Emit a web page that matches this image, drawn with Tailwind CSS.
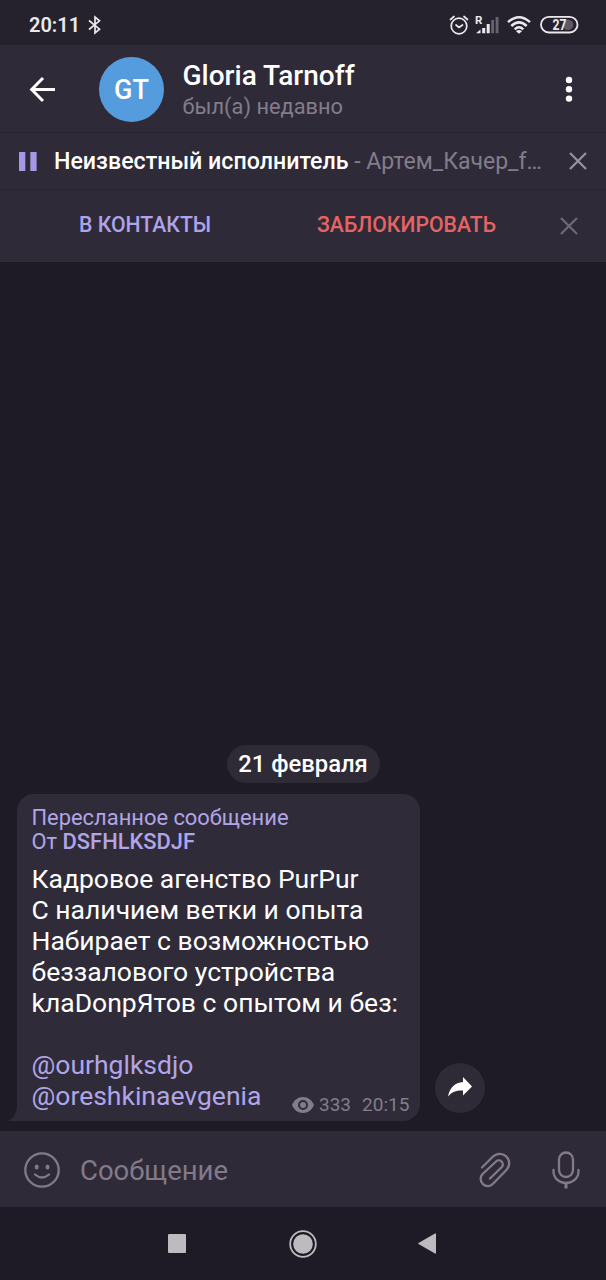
<!DOCTYPE html>
<html lang="ru">
<head>
<meta charset="utf-8">
<title>Gloria Tarnoff</title>
<script src="https://cdn.jsdelivr.net/npm/@tailwindcss/browser@4"></script>
</head>
<body class="bg-[#1e1b26]">
<div class="flex h-[1280px] w-[606px] flex-col overflow-hidden bg-[#1e1b26] font-['Roboto',sans-serif] text-white">

  <!-- Status bar -->
  <div class="flex h-[45px] shrink-0 items-center bg-[#25222d] pt-[5px] pl-[29px] text-[#ebe9ee]">
    <span class="w-[58px] text-[20px] leading-6 font-semibold whitespace-nowrap">20:11</span>
    <svg class="h-5 w-4" viewBox="0 0 16 20" fill="none" stroke="currentColor" stroke-width="1.7"><path d="M2 5.500 12.500 14.200 8 18V2L12.500 5.800 2 14.500"/></svg>
    <svg class="ml-[346px] h-5 w-5" viewBox="0 0 20 20" fill="none" stroke="currentColor" stroke-width="1.7" stroke-linecap="round"><circle cx="10" cy="11" r="7.8"/><path d="M1.500 4.500 5 1.500M18.500 4.500 15 1.500M7 10l3 2.500 3.500-2.500"/></svg>
    <svg class="ml-[6px] h-5 w-6 overflow-visible" viewBox="0 0 24 20" fill="currentColor"><text x="0" y="9" class="text-[11.5px] font-bold">R</text><path d="M1 18.200 5.500 14.500v3.700zM7.200 13h3v5.200h-3zM11.700 9h3v9.200h-3z"/><path d="M16.200 5h2.800v13.200h-2.800zM20.600 2h2.900v16.200h-2.900z" fill="#66636c"/></svg>
    <svg class="ml-[8px] h-5 w-6" viewBox="0 0 24 20" fill="none" stroke="currentColor" stroke-width="2.5"><path d="M1 7.200Q12-2.800 23 7.200M4.300 11Q12 3.800 19.700 11M7.700 14.300Q12 10.200 16.300 14.300"/><path d="M9 16.300q3-2.600 6 0l-3 2.500z" fill="currentColor" stroke="none"/></svg>
    <svg class="ml-[8px] h-5 w-10" viewBox="0 0 40 20"><circle cx="29" cy="9.700" r="5.300" fill="#5d5a64"/><rect x="2" y="1.900" width="36.500" height="15.600" rx="7.800" fill="none" stroke="currentColor" stroke-width="1.8"/><text x="13.500" y="14.700" textLength="14" lengthAdjust="spacingAndGlyphs" fill="currentColor" class="text-[14px] font-bold">27</text></svg>
  </div>

  <!-- Chat header -->
  <header class="flex h-[87px] shrink-0 items-center bg-[#2f2a38] pt-px pl-[29px]">
    <svg class="h-7 w-7" viewBox="0 0 28 28" fill="none" stroke="white" stroke-width="3"><path d="M26 14.500H3M14 3 2.700 14.500 14 26"/></svg>
    <div class="ml-[42px] flex size-[65px] items-center justify-center rounded-full bg-[#549cdd] pt-[3px] text-[27px] font-medium">GT</div>
    <div class="ml-[18.5px] w-[369.5px] pt-[4px] whitespace-nowrap">
      <div class="text-[28px] leading-8 font-medium">Gloria Tarnoff</div>
      <div class="text-[21.8px] leading-[30px] text-[#827d8b]">был(а) недавно</div>
    </div>
    <svg class="ml-[8px] h-7 w-[18px]" viewBox="0 0 18 28" fill="white"><circle cx="9" cy="5" r="3.2"/><circle cx="9" cy="14.300" r="3.2"/><circle cx="9" cy="23.600" r="3.2"/></svg>
  </header>

  <!-- Audio player -->
  <div class="flex h-[57px] shrink-0 items-center border-t border-[#29252f] bg-[#2f2a38] pl-[19px]">
    <svg class="h-[19px] w-[18px]" viewBox="0 0 18 19" fill="#a598e5"><rect width="6.3" height="19" rx=".5"/><rect x="11.300" width="6.3" height="19" rx=".5"/></svg>
    <p class="ml-[17px] w-[506px] pt-px text-[23.2px] leading-7 whitespace-nowrap text-[#827d8b]"><span class="font-medium text-white">Неизвестный исполнитель</span><span class="text-[23px]"> - Артем_Качер_f…</span></p>
    <svg class="ml-[9px] h-[18px] w-[18px]" viewBox="0 0 18 18" fill="none" stroke="#96929f" stroke-width="2.2"><path d="m1 1 16 16M17 1 1 17"/></svg>
  </div>

  <!-- Contact actions -->
  <div class="flex h-[73px] shrink-0 items-center border-t border-[#29252f] bg-[#2f2a38] pl-[79px] text-[21.2px] font-medium whitespace-nowrap">
    <span class="w-[238px] pb-[2px] text-[#aea2ea]">В КОНТАКТЫ</span>
    <span class="w-[243px] pb-[2px] text-[#e56464]">ЗАБЛОКИРОВАТЬ</span>
    <svg class="h-[18px] w-[18px]" viewBox="0 0 18 18" fill="none" stroke="#6d6976" stroke-width="2.2"><path d="m1 1 16 16M17 1 1 17"/></svg>
  </div>

  <!-- Messages -->
  <main class="flex min-h-0 flex-1 flex-col justify-end pb-[10px]">
    <div class="mb-[11px] flex h-[38px] w-[153px] items-center justify-center self-center rounded-full bg-[#2e2b37] pt-px text-[23.8px] font-medium whitespace-nowrap">21 февраля</div>
    <div class="flex items-end pl-[8px]">
      <svg class="h-5 w-[9px]" viewBox="0 0 9 20" fill="#302b38"><path d="M9 0v20H0q8-3 9-14z"/></svg>
      <div class="flex h-[327px] w-[403px] flex-col rounded-[17px] rounded-bl-none bg-[#302b38] pt-[12px] pl-[14.5px] whitespace-nowrap">
        <div class="text-[21.9px] leading-6 text-[#b0a5e8]">Пересланное сообщение<br>От <span class="font-medium">DSFHLKSDJF</span></div>
        <div class="mt-[9px] flex">
          <div class="w-[260.5px] text-[26.5px] leading-[31px]">Кадровое агенство PurPur<br>С наличием ветки и опыта<br>Набирает с возможностью<br>беззалового устройства<br>kлаDonpЯтов с опытом и без:<br><br><span class="text-[#b0a5e8]">@ourhglksdjo<br>@oreshkinaevgenia</span></div>
          <div class="-mb-[6px] flex items-center self-end text-[19px] leading-6 text-[#827d8b]">
            <svg class="h-4 w-[22px]" viewBox="0 0 22 16" fill="currentColor"><path fill-rule="evenodd" d="M11 0C6 0 2 3 0 8c2 5 6 8 11 8s9-3 11-8c-2-5-6-8-11-8m0 13a5 5 0 1 1 0-10 5 5 0 0 1 0 10"/><circle cx="11" cy="8" r="3"/></svg>
            <span class="ml-[5px]">333</span><span class="ml-[11px]">20:15</span>
          </div>
        </div>
      </div>
      <div class="mb-[8px] ml-[15px] flex size-[50px] items-center justify-center rounded-full bg-[#2e2b37]">
        <svg class="mb-[2px] h-5 w-6" viewBox="0 0 24 20" fill="white"><path d="M15 0 24 9.500 15 18.500V13.600C9 13.300 4.500 14.500 0 19.500 1.500 11 7 5.500 15 5z"/></svg>
      </div>
    </div>
  </main>

  <!-- Message input -->
  <div class="flex h-[76px] shrink-0 items-center bg-[#2f2a38] pt-[2px] pl-[24px] text-[#827a8b]">
    <svg class="h-9 w-9" viewBox="0 0 36 36" fill="none" stroke="currentColor" stroke-width="2.3" stroke-linecap="round"><circle cx="18" cy="18" r="16.7"/><path d="M11 22.500q7 6 14 0"/><g fill="currentColor" stroke="none"><ellipse cx="12.700" cy="15" rx="2" ry="2.5"/><ellipse cx="23.500" cy="15" rx="2" ry="2.5"/></g></svg>
    <span class="ml-[20px] w-[398px] pt-px text-[27.5px]">Сообщение</span>
    <svg class="h-9 w-[34px]" viewBox="0 0 34 36" fill="none" stroke="currentColor" stroke-width="2.3" stroke-linecap="round" stroke-linejoin="round"><path d="M4 15.500 14.800 4.800a9.300 9.300 0 0 1 13.800 13L15 31.800a7 7 0 0 1-10.400-9.800L18 9.500a4 4 0 0 1 5.800 5.500L12 26.500"/></svg>
    <svg class="ml-[40px] h-[38px] w-7" viewBox="0 0 28 38" fill="none" stroke="currentColor" stroke-width="2.3" stroke-linecap="round"><rect x="7" y="1.500" width="14" height="24.500" rx="7"/><path d="M1.500 19v1.500a12.500 11.500 0 0 0 25 0V19"/><path d="M14 32v5.500" stroke-width="3" stroke-linecap="butt"/></svg>
  </div>

  <!-- System navigation -->
  <nav class="flex h-[73px] shrink-0 items-center pl-[168px] text-[#bdbbbf]">
    <div class="h-[19px] w-[18px] rounded-[1px] bg-[#bdbbbf]"></div>
    <svg class="ml-[103px] size-7" viewBox="0 0 28 28" fill="currentColor"><circle cx="14" cy="14" r="9.8"/><circle cx="14" cy="14" r="12.8" fill="none" stroke="currentColor" stroke-width="1.8"/></svg>
    <svg class="ml-[101px] h-[21px] w-[18px]" viewBox="0 0 18 21" fill="currentColor"><path d="M17 .5q1-.5 1 .8v18.400q0 1.300-1 .8L.5 11q-.7-.5 0-1z"/></svg>
  </nav>
</div>
</body>
</html>
